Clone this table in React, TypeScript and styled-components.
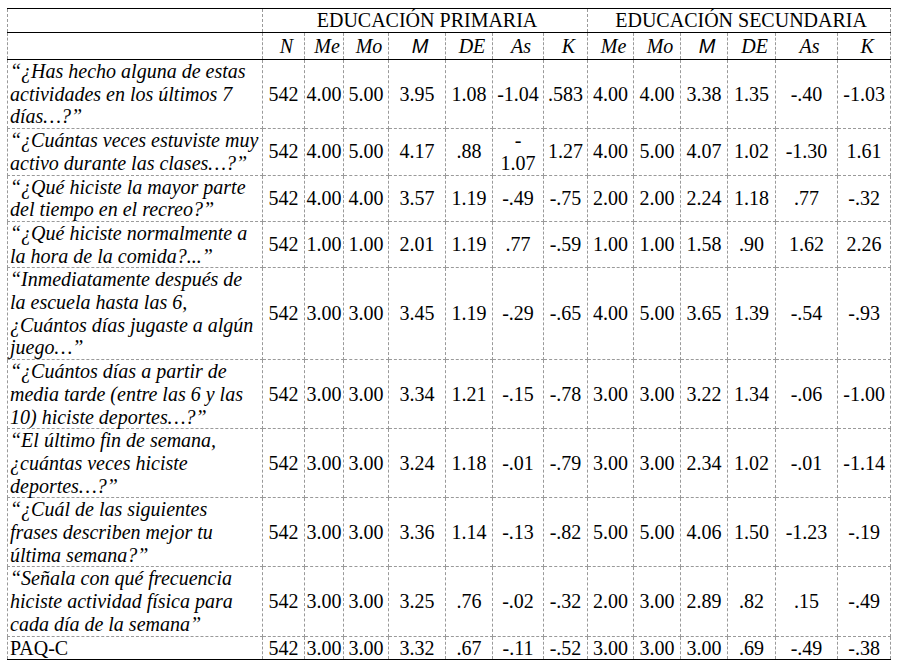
import React from "react";
import styled, { createGlobalStyle } from "styled-components";

const GlobalStyle = createGlobalStyle`
  html, body {
    margin: 0;
    padding: 0;
    background: #ffffff;
  }
  body {
    font-family: "Liberation Serif", "Times New Roman", serif;
    color: #000;
  }
`;

const Page = styled.div`
  padding: 8px 0 0 7px;
  width: 898px;
  box-sizing: border-box;
`;

const Table = styled.table`
  border-collapse: collapse;
  table-layout: fixed;
  width: 884px;
  font-family: "Liberation Serif", "Times New Roman", serif;
  font-size: 20px;
  line-height: 22.7px;
  color: #000;
  border: 1px dashed #9a9a9a;
  border-top: 1px solid #000;
  border-bottom: 1px solid #000;
`;

const Cell = styled.td`
  border: 1px dashed #9a9a9a;
  padding: 0;
  white-space: nowrap;
`;

const GroupCell = styled(Cell)`
  height: 23px;
  text-align: center;
  vertical-align: middle;
  border-bottom: 1px solid #000;
  padding-left: 4px;
`;

const StatCell = styled(Cell)`
  height: 26px;
  text-align: center;
  vertical-align: middle;
  font-style: italic;
  border-bottom: 1px solid #000;
  padding-left: 6px;
`;

const MathM = styled.span`
  font-family: "Liberation Sans", Arial, sans-serif;
  font-style: italic;
  font-size: 20px;
`;

const QuestionCell = styled(Cell)<{ $italic: boolean }>`
  text-align: left;
  vertical-align: top;
  font-style: ${(p) => (p.$italic ? "italic" : "normal")};
  padding-left: 2px;
`;

const NumCell = styled(Cell)`
  text-align: center;
  vertical-align: middle;
`;

const widths = [255, 42, 39, 45, 57, 47, 51, 44, 46, 47, 47, 48, 62, 53];

type Row = { q: string[]; italic: boolean; v: React.ReactNode[] };

const split = (s: string) => s.split(" ");

const rows: Row[] = [
  {
    q: ["“¿Has hecho alguna de estas", "actividades en los últimos 7", "días…?”"],
    italic: true,
    v: split("542 4.00 5.00 3.95 1.08 -1.04 .583 4.00 4.00 3.38 1.35 -.40 -1.03"),
  },
  {
    q: ["“¿Cuántas veces estuviste muy", "activo durante las clases…?”"],
    italic: true,
    v: [
      ...split("542 4.00 5.00 4.17 .88"),
      (
        <>
          -<br />
          1.07
        </>
      ),
      ...split("1.27 4.00 5.00 4.07 1.02 -1.30 1.61"),
    ],
  },
  {
    q: ["“¿Qué hiciste la mayor parte", "del tiempo en el recreo?”"],
    italic: true,
    v: split("542 4.00 4.00 3.57 1.19 -.49 -.75 2.00 2.00 2.24 1.18 .77 -.32"),
  },
  {
    q: ["“¿Qué hiciste normalmente a", "la hora de la comida?...”"],
    italic: true,
    v: split("542 1.00 1.00 2.01 1.19 .77 -.59 1.00 1.00 1.58 .90 1.62 2.26"),
  },
  {
    q: [
      "“Inmediatamente después de",
      "la escuela hasta las 6,",
      "¿Cuántos días jugaste a algún",
      "juego…”",
    ],
    italic: true,
    v: split("542 3.00 3.00 3.45 1.19 -.29 -.65 4.00 5.00 3.65 1.39 -.54 -.93"),
  },
  {
    q: ["“¿Cuántos días a partir de", "media tarde (entre las 6 y las", "10) hiciste deportes…?”"],
    italic: true,
    v: split("542 3.00 3.00 3.34 1.21 -.15 -.78 3.00 3.00 3.22 1.34 -.06 -1.00"),
  },
  {
    q: ["“El último fin de semana,", "¿cuántas veces hiciste", "deportes…?”"],
    italic: true,
    v: split("542 3.00 3.00 3.24 1.18 -.01 -.79 3.00 3.00 2.34 1.02 -.01 -1.14"),
  },
  {
    q: ["“¿Cuál de las siguientes", "frases describen mejor tu", "última semana?”"],
    italic: true,
    v: split("542 3.00 3.00 3.36 1.14 -.13 -.82 5.00 5.00 4.06 1.50 -1.23 -.19"),
  },
  {
    q: ["“Señala con qué frecuencia", "hiciste actividad física para", "cada día de la semana”"],
    italic: true,
    v: split("542 3.00 3.00 3.25 .76 -.02 -.32 2.00 3.00 2.89 .82 .15 -.49"),
  },
  {
    q: ["PAQ-C"],
    italic: false,
    v: split("542 3.00 3.00 3.32 .67 -.11 -.52 3.00 3.00 3.00 .69 -.49 -.38"),
  },
];

const stats: React.ReactNode[] = [
  "N",
  "Me",
  "Mo",
  <MathM>M</MathM>,
  "DE",
  "As",
  "K",
  "Me",
  "Mo",
  <MathM>M</MathM>,
  "DE",
  "As",
  "K",
];

export default function App() {
  return (
    <>
      <GlobalStyle />
      <Page>
        <Table>
          <colgroup>
            {widths.map((w, i) => (
              <col key={i} style={{ width: w }} />
            ))}
          </colgroup>
          <thead>
            <tr>
              <GroupCell />
              <GroupCell colSpan={7}>EDUCACIÓN PRIMARIA</GroupCell>
              <GroupCell colSpan={6}>EDUCACIÓN SECUNDARIA</GroupCell>
            </tr>
            <tr>
              <StatCell />
              {stats.map((s, i) => (
                <StatCell key={i}>{s}</StatCell>
              ))}
            </tr>
          </thead>
          <tbody>
            {rows.map((r, i) => (
              <tr key={i}>
                <QuestionCell $italic={r.italic}>
                  {r.q.map((line, j) => (
                    <React.Fragment key={j}>
                      {j > 0 && <br />}
                      {line}
                    </React.Fragment>
                  ))}
                </QuestionCell>
                {r.v.map((v, j) => (
                  <NumCell key={j}>{v}</NumCell>
                ))}
              </tr>
            ))}
          </tbody>
        </Table>
      </Page>
    </>
  );
}
